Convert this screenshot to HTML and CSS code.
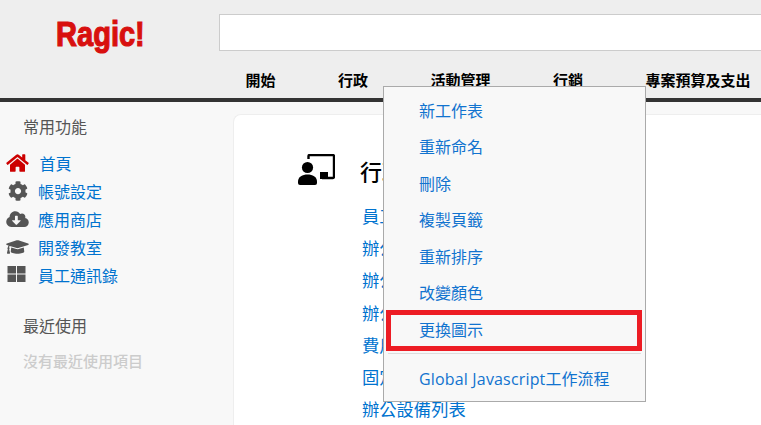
FILE: index.html
```html
<!DOCTYPE html>
<html lang="zh-Hant">
<head>
<meta charset="utf-8">
<title>Ragic</title>
<link rel="stylesheet" href="styles.css">
</head>
<body>
<header class="header">
  <div class="header-top">
    <div class="logo-wrap"><span class="logo">Ragic!</span></div>
    <div class="search"></div>
  </div>
  <nav class="tabs">
    <span class="tab">開始</span>
    <span class="tab">行政</span>
    <span class="tab">活動管理</span>
    <span class="tab">行銷</span>
    <span class="tab">專案預算及支出</span>
  </nav>
</header>
<div class="page">
  <aside class="sidebar">
    <h2 class="side-title">常用功能</h2>
    <ul class="side-list">
      <li class="side-item">
        <span class="side-icon"><svg class="ico-home" viewBox="0 0 576 512"><path d="M280.37 148.26L96 300.11V464a16 16 0 0 0 16 16l112.06-.29a16 16 0 0 0 15.92-16V368a16 16 0 0 1 16-16h64a16 16 0 0 1 16 16v95.64a16 16 0 0 0 16 16.05L464 480a16 16 0 0 0 16-16V300L295.67 148.26a12.19 12.19 0 0 0-15.3 0zM571.6 251.47L488 182.56V44.05a12 12 0 0 0-12-12h-56a12 12 0 0 0-12 12v72.61L318.47 43a48 48 0 0 0-61 0L4.34 251.47a12 12 0 0 0-1.6 16.9l25.5 31A12 12 0 0 0 45.15 301l235.22-193.74a12.19 12.19 0 0 1 15.3 0L530.9 301a12 12 0 0 0 16.9-1.6l25.5-31a12 12 0 0 0-1.7-16.93z"/></svg></span>
        <a class="side-link home-link">首頁</a>
      </li>
      <li class="side-item">
        <span class="side-icon"><svg class="ico-cog" viewBox="0 0 512 512"><path d="M487.4 315.7l-42.6-24.6c4.3-23.2 4.3-47 0-70.2l42.6-24.6c4.9-2.8 7.1-8.6 5.5-14-11.1-35.6-30-67.8-54.7-94.6-3.8-4.1-10-5.1-14.8-2.3L380.8 110c-17.9-15.4-38.5-27.3-60.8-35.1V25.8c0-5.6-3.9-10.5-9.4-11.7-36.7-8.2-74.3-7.8-109.2 0-5.5 1.2-9.4 6.1-9.4 11.7V75c-22.2 7.9-42.8 19.8-60.8 35.1L88.7 85.5c-4.9-2.8-11-1.9-14.8 2.3-24.7 26.7-43.6 58.9-54.7 94.6-1.7 5.4.6 11.2 5.5 14L67.3 221c-4.3 23.2-4.3 47 0 70.2l-42.6 24.6c-4.9 2.8-7.1 8.6-5.5 14 11.1 35.6 30 67.8 54.7 94.6 3.8 4.1 10 5.1 14.8 2.3l42.6-24.6c17.9 15.4 38.5 27.3 60.8 35.1v49.2c0 5.6 3.9 10.5 9.4 11.7 36.7 8.2 74.3 7.8 109.2 0 5.5-1.2 9.4-6.1 9.4-11.7v-49.2c22.2-7.9 42.8-19.8 60.8-35.1l42.6 24.6c4.9 2.8 11 1.9 14.8-2.3 24.7-26.7 43.6-58.9 54.7-94.6 1.5-5.5-.7-11.3-5.6-14.1zM256 336c-44.1 0-80-35.9-80-80s35.9-80 80-80 80 35.9 80 80-35.9 80-80 80z"/></svg></span>
        <a class="side-link">帳號設定</a>
      </li>
      <li class="side-item">
        <span class="side-icon"><svg class="ico-wide" viewBox="0 0 640 512"><path d="M537.6 226.6c4.1-10.7 6.4-22.4 6.4-34.6 0-53-43-96-96-96-19.7 0-38.1 6-53.3 16.2C367 64.2 315.3 32 256 32c-88.4 0-160 71.6-160 160 0 2.7.1 5.4.2 8.1C40.2 219.8 0 273.2 0 336c0 79.5 64.5 144 144 144h368c70.7 0 128-57.3 128-128 0-61.9-44-113.6-102.4-125.4zm-132.9 88.7L299.3 420.7c-6.2 6.2-16.4 6.2-22.6 0L171.3 315.3c-10.1-10.1-2.9-27.3 11.3-27.3H248V176c0-8.8 7.2-16 16-16h48c8.8 0 16 7.2 16 16v112h65.4c14.2 0 21.4 17.2 11.3 27.3z"/></svg></span>
        <a class="side-link">應用商店</a>
      </li>
      <li class="side-item">
        <span class="side-icon"><svg class="ico-wide" viewBox="0 0 640 512"><path d="M622.34 153.2L343.4 67.5c-15.2-4.67-31.6-4.67-46.79 0L17.66 153.2c-23.54 7.23-23.54 38.36 0 45.59l48.63 14.94c-10.67 13.19-17.23 29.28-17.88 46.9C38.78 266.15 32 276.11 32 288c0 10.78 5.68 19.85 13.86 25.65L20.33 428.53C18.11 438.52 25.71 448 35.94 448h56.11c10.24 0 17.84-9.48 15.62-19.47L82.14 313.65C90.32 307.85 96 298.78 96 288c0-11.57-6.47-21.25-15.66-26.87.76-15.02 8.44-28.3 20.69-36.72L296.6 284.5c9.06 2.78 26.44 6.25 46.79 0l278.95-85.7c23.55-7.24 23.55-38.36 0-45.6zM352.79 315.09c-28.53 8.76-52.84 3.92-65.59 0l-145.02-44.55L128 384c0 35.35 85.96 64 192 64s192-28.65 192-64l-14.18-113.47-145.03 44.56z"/></svg></span>
        <a class="side-link">開發教室</a>
      </li>
      <li class="side-item">
        <span class="side-icon"><svg class="ico-grid" viewBox="0 0 18 16"><rect x="0" y="0" width="8.5" height="7.5"/><rect x="9.5" y="0" width="8.5" height="7.5"/><rect x="0" y="8.5" width="8.5" height="7.5"/><rect x="9.5" y="8.5" width="8.5" height="7.5"/></svg></span>
        <a class="side-link">員工通訊錄</a>
      </li>
    </ul>
    <h2 class="side-title recent">最近使用</h2>
    <p class="side-empty">沒有最近使用項目</p>
  </aside>
  <main class="card">
    <div class="card-head">
      <svg class="ico-present" viewBox="0 0 37 31">
        <path class="screen" d="M10.5 5V2.2A1.2 1.2 0 0 1 11.7 1H34.8A1.2 1.2 0 0 1 36 2.2V22.8A1.2 1.2 0 0 1 34.8 24H24"/>
        <rect x="22" y="18" width="8" height="7"/>
        <circle cx="9.5" cy="13.5" r="5.6"/>
        <path d="M0 27.5C0 23 4.5 20.5 9.5 20.5S19 23 19 27.5V29a2 2 0 0 1-2 2H2a2 2 0 0 1-2-2z"/>
      </svg>
      <h1 class="card-title">行政</h1>
    </div>
    <ul class="link-list">
      <li class="link-item">員工資料表</li>
      <li class="link-item">辦公用品列表</li>
      <li class="link-item">辦公用品領用</li>
      <li class="link-item">辦公用品採購</li>
      <li class="link-item">費用報銷單</li>
      <li class="link-item">固定資產列表</li>
      <li class="link-item">辦公設備列表</li>
    </ul>
  </main>
</div>
<div class="menu">
  <a class="menu-item">新工作表</a>
  <a class="menu-item">重新命名</a>
  <a class="menu-item">刪除</a>
  <a class="menu-item">複製頁籤</a>
  <a class="menu-item">重新排序</a>
  <a class="menu-item">改變顏色</a>
  <a class="menu-item">更換圖示</a>
  <div class="menu-sep"></div>
  <a class="menu-item"><span class="latin">Global Javascript</span>工作流程</a>
  <div class="highlight"></div>
</div>
</body>
</html>
```
FILE: styles.css
```css
* { box-sizing: border-box; }
html, body { margin: 0; padding: 0; height: 425px; overflow: hidden; }
body {
  position: relative;
  display: flex;
  flex-direction: column;
  background: #f8f8f8;
  font-family: "Open Sans", "Noto Sans CJK TC", sans-serif;
  font-size: 16px;
  color: #333;
}
.header {
  flex: none;
  height: 102px;
  background: #eee;
  border-bottom: 4px solid #333;
}
.header-top { display: flex; height: 51px; padding-top: 15px; }
.logo-wrap { width: 219px; flex: none; padding: 0 0 0 56px; }
.logo {
  display: block;
  width: 110px;
  font-family: "Liberation Sans", sans-serif;
  font-weight: 700;
  font-size: 35px;
  line-height: 37px;
  color: #d8100f;
  -webkit-text-stroke: 1.2px #d8100f;
  transform: scaleX(0.83);
  transform-origin: left center;
}
.search {
  flex: 1;
  margin: -1px -4px 0 0;
  height: 37px;
  background: #fff;
  border: 1px solid #ccc;
}
.tabs {
  display: flex;
  gap: 62.5px;
  margin-top: 18px;
  padding-left: 245.5px;
  white-space: nowrap;
}
.tab { font-size: 15px; font-weight: 700; line-height: 22px; color: #000; }
.page { flex: 1; display: flex; min-height: 0; }
.sidebar { flex: none; width: 233px; padding-top: 13px; }
.side-title {
  margin: 0;
  padding-left: 23px;
  font-size: 16px;
  font-weight: 400;
  line-height: 24px;
  color: #555;
}
.side-list { list-style: none; margin: 10px 0 0; padding: 0; }
.side-item { display: flex; align-items: center; height: 28px; }
.side-icon { flex: none; width: 38px; padding-left: 6px; display: flex; align-items: center; }
.side-icon svg { display: block; fill: #555; }
.ico-home { width: 23px; height: 20px; fill: #cc0000 !important; }
.ico-cog { width: 20px; height: 20px; margin-left: 2px; }
.ico-wide { width: 23px; height: 18px; }
.ico-grid { width: 19px; height: 16px; margin: -2px 0 0 1px; }
.side-link { color: #0073cf; }
.home-link { margin-left: 1.5px; }
.recent { margin-top: 25px; }
.side-empty {
  margin: 11px 0 0;
  padding-left: 23px;
  font-size: 15px;
  font-weight: 500;
  line-height: 24px;
  color: #ccc;
}
.card {
  flex: 1;
  margin-top: 12px;
  background: #fff;
  border-top: 1px solid #eee;
  border-left: 1px solid #eee;
  border-top-left-radius: 8px;
  padding: 38px 0 0 64px;
  min-width: 0;
}
.card-head { display: flex; align-items: center; height: 32px; }
.ico-present { flex: none; width: 37px; height: 31px; fill: #000; }
.screen { fill: none; stroke: #000; stroke-width: 2.4; }
.card-title {
  margin: 4px 0 0 25px;
  font-size: 22px;
  font-weight: 500;
  line-height: 32px;
  color: #000;
  white-space: nowrap;
}
.link-list { list-style: none; margin: 16px 0 0; padding: 0 0 0 64px; }
.link-item { height: 32.2px; font-size: 17.3px; line-height: 32.2px; color: #0073cf; white-space: nowrap; }
.menu {
  position: absolute;
  left: 383px;
  top: 86px;
  width: 263px;
  height: 316px;
  padding-top: 5.75px;
  display: flex;
  flex-direction: column;
  background: #f8f8f8;
  border: 1px solid #aaa;
}
.menu-item {
  flex: none;
  height: 36.5px;
  line-height: 36.5px;
  padding-left: 35px;
  color: #1173cf;
  white-space: nowrap;
}
.latin { letter-spacing: 0.17px; }
.menu-sep { flex: none; height: 1px; margin: 5px 4px 7px 4px; background: #ddd; }
.highlight {
  position: absolute;
  left: 2px;
  top: 223px;
  width: 256px;
  height: 41px;
  border: 5px solid #ed1c24;
}
```
